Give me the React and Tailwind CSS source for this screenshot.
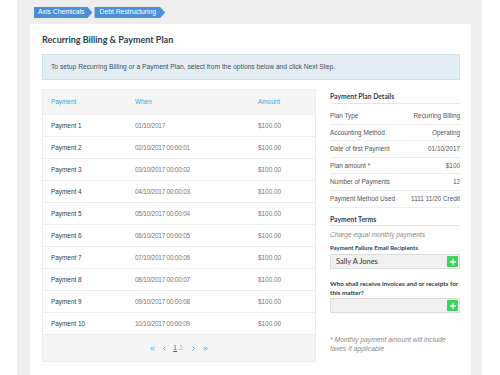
import { ChevronsLeft, ChevronLeft, ChevronRight, ChevronsRight, Plus } from "lucide-react";

const payments = [
  { name: "Payment 1", when: "01/10/2017", amount: "$100.00" },
  { name: "Payment 2", when: "02/10/2017 00:00:01", amount: "$100.00" },
  { name: "Payment 3", when: "03/10/2017 00:00:02", amount: "$100.00" },
  { name: "Payment 4", when: "04/10/2017 00:00:03", amount: "$100.00" },
  { name: "Payment 5", when: "05/10/2017 00:00:04", amount: "$100.00" },
  { name: "Payment 6", when: "06/10/2017 00:00:05", amount: "$100.00" },
  { name: "Payment 7", when: "07/10/2017 00:00:06", amount: "$100.00" },
  { name: "Payment 8", when: "08/10/2017 00:00:07", amount: "$100.00" },
  { name: "Payment 9", when: "09/10/2017 00:00:08", amount: "$100.00" },
  { name: "Payment 10", when: "10/10/2017 00:00:09", amount: "$100.00" },
];

const details = [
  ["Plan Type", "Recurring Billing"],
  ["Accounting Method", "Operating"],
  ["Date of first Payment", "01/10/2017"],
  ["Plan amount *", "$100"],
  ["Number of Payments", "12"],
  ["Payment Method Used", "1111 11/20 Credit"],
];

function AddInput({ value }) {
  return (
    <div className="flex items-center justify-between h-[15px] bg-[#f1f1f1] border border-[#dcdcdc] pl-[5px] pr-[1px]">
      <span className="font-['Lato'] text-[7.5px] text-[#333]">{value}</span>
      <span className="flex items-center justify-center w-[11px] h-[11px] bg-[#3ed35f] rounded-[1px]">
        <Plus size={8} strokeWidth={4} className="text-white" />
      </span>
    </div>
  );
}

export default function App() {
  return (
    <div className="w-[500px] h-[375px] bg-white overflow-hidden font-['Liberation_Sans',sans-serif]">
      <div className="ml-[17px] w-[465px] h-[375px] bg-[#eeeeee] pt-[7px]">
        {/* Breadcrumb */}
        <div className="flex items-center h-[11px] ml-[17px] gap-[2px]">
          <div className="h-[11px] pl-[4px] pr-[8px] flex items-center bg-[#4b8fd8] text-white text-[6.8px] [clip-path:polygon(0_0,calc(100%-5px)_0,100%_50%,calc(100%-5px)_100%,0_100%)]">
            Axis Chemicals
          </div>
          <div className="h-[11px] pl-[5px] pr-[9px] flex items-center bg-[#4b8fd8] text-white text-[6.8px] [clip-path:polygon(0_0,calc(100%-5px)_0,100%_50%,calc(100%-5px)_100%,0_100%)]">
            Debt Restructuring
          </div>
        </div>

        {/* Card */}
        <div className="ml-[13px] mt-[6px] w-[441px] h-[400px] bg-white pl-[12px] pr-[11px] pt-[9px]">
          <h1 className="font-['Lato'] font-bold text-[9px] leading-[14px] text-[#2c3e50]">
            Recurring Billing &amp; Payment Plan
          </h1>
          <div className="mt-[7px] h-[26px] flex items-center pl-[8px] bg-[#e2eef4] border border-[#cfe2ea] text-[6.7px] text-[#3d4f5c]">
            To setup Recurring Billing or a Payment Plan, select from the options below and click Next Step.
          </div>

          <div className="flex mt-[9px] gap-[14px]">
            {/* Payments table */}
            <div className="w-[274px] bg-[#f5f5f5] border border-[#ececec]">
              <div className="flex items-center h-[24px] text-[6.4px] text-[#3aa5d8]">
                <span className="w-[92px] pl-[8px]">Payment</span>
                <span className="w-[123px]">When</span>
                <span>Amount</span>
              </div>
              {payments.map((p) => (
                <div key={p.name} className="flex items-center h-[22px] bg-white border-t border-[#efefef] text-[6.4px]">
                  <span className="w-[92px] pl-[8px] text-[#2c3e50]">{p.name}</span>
                  <span className="w-[123px] text-[#777] tracking-[-0.2px]">{p.when}</span>
                  <span className="text-[#777]">{p.amount}</span>
                </div>
              ))}
              <div className="flex items-center justify-center h-[27px] border-t border-[#ececec] text-[6.6px] text-[#3aa5d8]">
                <ChevronsLeft size={7} strokeWidth={3} />
                <ChevronLeft size={7} strokeWidth={3} className="ml-[5px]" />
                <span className="ml-[5px] text-[#555] underline">1</span>
                <span className="ml-[2px] text-[#7cc3e6]">2</span>
                <ChevronRight size={7} strokeWidth={3} className="ml-[7px]" />
                <ChevronsRight size={7} strokeWidth={3} className="ml-[5px]" />
              </div>
            </div>

            {/* Details panel */}
            <div className="w-[130px] pt-[2px] text-[6.4px] text-[#555]">
              <div className="h-[13px] pb-[1px] flex items-center border-b border-[#e6e6e6] font-['Lato'] font-bold text-[6.8px] text-[#2c3e50]">
                Payment Plan Details
              </div>
              <div className="pt-[4px]">
                {details.map(([k, v]) => (
                  <div key={k} className="flex items-center justify-between h-[16.6px] border-b border-[#eeeeee]">
                    <span>{k}</span>
                    <span>{v}</span>
                  </div>
                ))}
              </div>
              <div className="mt-[7px] h-[11px] flex items-center border-b border-[#e6e6e6] font-['Lato'] font-bold text-[6.8px] text-[#2c3e50]">
                Payment Terms
              </div>
              <div className="mt-[4px] italic text-[6.6px] text-[#8a8a8a]">Charge equal monthly payments</div>
              <div className="mt-[4px] font-['Lato'] font-bold text-[6px] text-[#2c3e50]">
                Payment Failure Email Recipients
              </div>
              <div className="mt-[2px]">
                <AddInput value="Sally A Jones" />
              </div>
              <div className="mt-[11px] font-['Lato'] font-bold text-[6.4px] leading-[8.5px] text-[#2c3e50]">
                Who shall receive invoices and or receipts for this matter?
              </div>
              <div className="mt-[1px]">
                <AddInput value="" />
              </div>
              <div className="mt-[23px] w-[118px] italic text-[6.8px] text-[#8a8a8a] leading-[8.5px]">
                * Monthly payment amount will include taxes if applicable
              </div>
            </div>
          </div>
        </div>
      </div>
    </div>
  );
}
